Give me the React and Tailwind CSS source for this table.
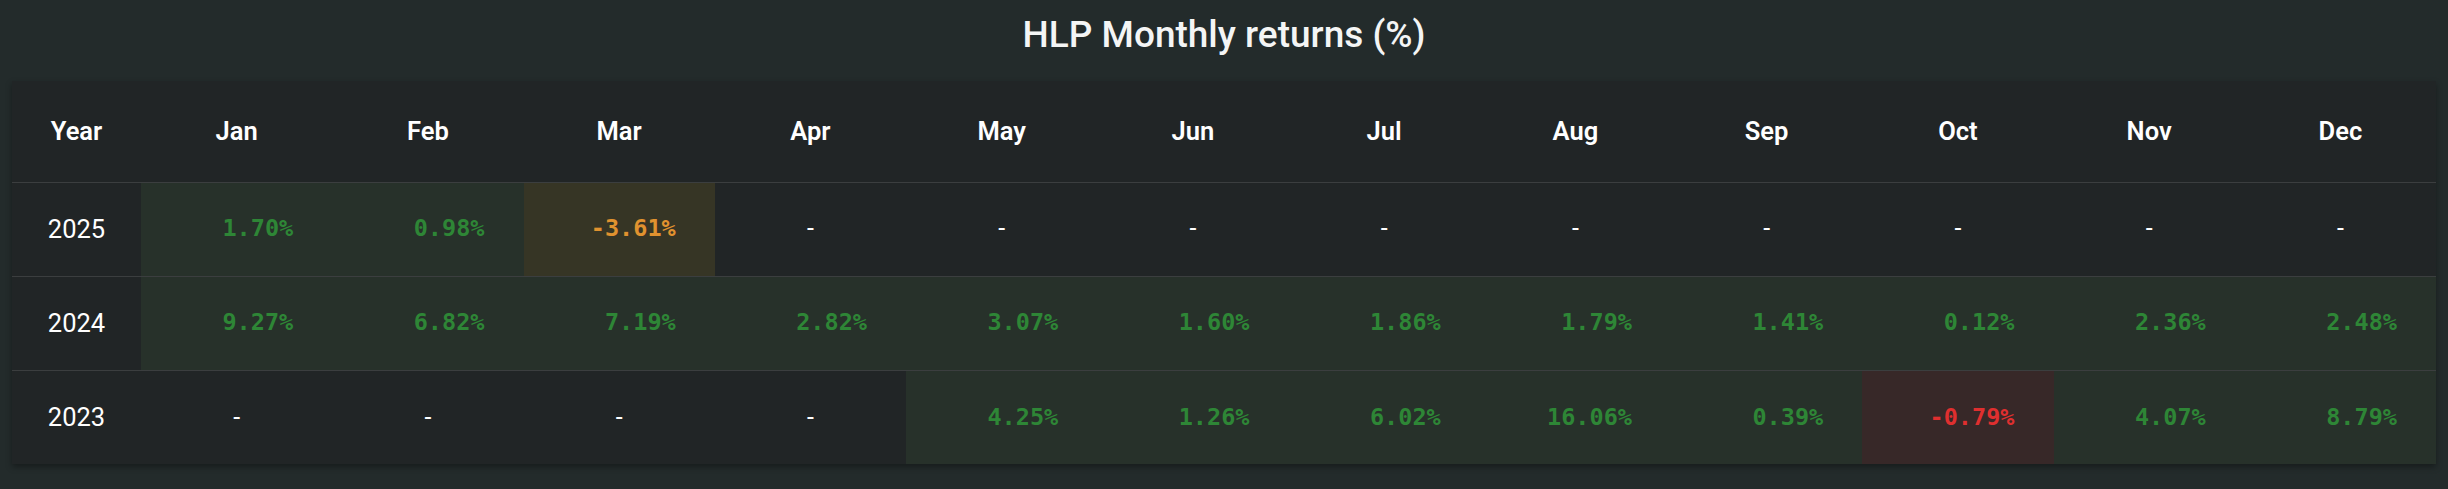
const MONTHS = ["Jan", "Feb", "Mar", "Apr", "May", "Jun", "Jul", "Aug", "Sep", "Oct", "Nov", "Dec"];

const ROWS = [
  { year: "2025", values: [1.7, 0.98, -3.61, null, null, null, null, null, null, null, null, null] },
  { year: "2024", values: [9.27, 6.82, 7.19, 2.82, 3.07, 1.6, 1.86, 1.79, 1.41, 0.12, 2.36, 2.48] },
  { year: "2023", values: [null, null, null, null, 4.25, 1.26, 6.02, 16.06, 0.39, -0.79, 4.07, 8.79] },
];

function cellTone(v) {
  if (v === null) return { bg: "", text: "text-white" };
  if (v >= 0) return { bg: "bg-[#27312a]", text: "text-[#2e8636]" };
  if (v > -1) return { bg: "bg-[#372828]", text: "text-[#df2f2f]" };
  return { bg: "bg-[#363525]", text: "text-[#e0922f]" };
}

function ValueCell({ v }) {
  const tone = cellTone(v);
  return (
    <td className={`${tone.bg} text-center align-middle`}>
      {v === null ? (
        <span className="text-white text-[25px] font-['Roboto',sans-serif]">-</span>
      ) : (
        <span
          className={`${tone.text} inline-block w-[8ch] text-right font-['DejaVu_Sans_Mono',monospace] font-bold text-[23.5px]`}
        >
          {v.toFixed(2)}%
        </span>
      )}
    </td>
  );
}

export default function App() {
  return (
    <div className="bg-[#232b2b] w-[2448px] h-[489px] px-[12px] font-['Roboto',sans-serif]">
      <h2 className="h-[69px] flex items-center justify-center text-[37px] font-medium text-[#f4f5f5]">
        HLP Monthly returns (%)
      </h2>

      <div className="mt-[12px] bg-[#212526] shadow-[0_3px_6px_rgba(0,0,0,0.35)]">
        <table className="w-full table-fixed border-collapse">
          <colgroup>
            <col className="w-[129px]" />
            {MONTHS.map((m) => (
              <col key={m} />
            ))}
          </colgroup>
          <thead>
            <tr className="h-[101px] border-b border-[#3b3e3f]">
              <th className="text-center text-white text-[25.5px] font-semibold">Year</th>
              {MONTHS.map((m) => (
                <th key={m} className="text-center text-white text-[25.5px] font-semibold">
                  {m}
                </th>
              ))}
            </tr>
          </thead>
          <tbody>
            {ROWS.map((row, i) => (
              <tr
                key={row.year}
                className={`h-[94px] ${i < ROWS.length - 1 ? "border-b border-[#3b3e3f]" : ""}`}
              >
                <td className="text-center text-white text-[25.5px]">{row.year}</td>
                {row.values.map((v, j) => (
                  <ValueCell key={j} v={v} />
                ))}
              </tr>
            ))}
          </tbody>
        </table>
      </div>
    </div>
  );
}
